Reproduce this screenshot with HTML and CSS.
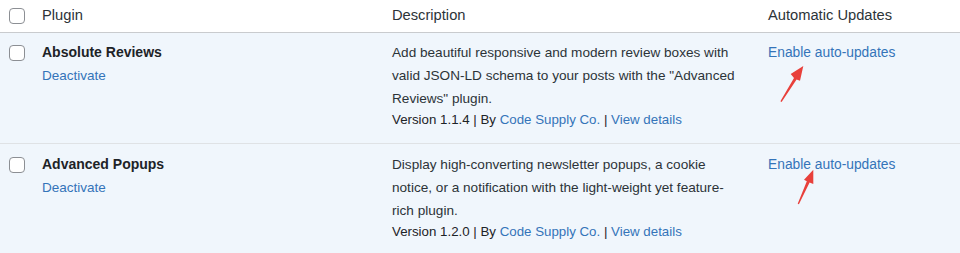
FILE: index.html
```html
<!DOCTYPE html>
<html lang="en">
<head>
<meta charset="utf-8">
<title>Plugins</title>
<link rel="stylesheet" href="styles.css">
</head>
<body>
<table class="plugins">
  <colgroup>
    <col class="c-cb"><col class="c-name"><col class="c-desc"><col class="c-auto">
  </colgroup>
  <thead>
    <tr>
      <th class="cb"><span class="box"></span></th>
      <th class="head">Plugin</th>
      <th class="head">Description</th>
      <th class="head">Automatic Updates</th>
    </tr>
  </thead>
  <tbody>
    <tr class="active first">
      <td class="cb"><span class="box"></span></td>
      <td class="name">
        <strong class="title">Absolute Reviews</strong>
        <a class="link act" href="#">Deactivate</a>
      </td>
      <td class="desc">
        <p class="text">Add beautiful responsive and modern review boxes with valid JSON-LD schema to your posts with the "Advanced Reviews" plugin.</p>
        <div class="meta">Version 1.1.4 | By <a class="link" href="#">Code Supply Co.</a> | <a class="link" href="#">View details</a></div>
      </td>
      <td class="auto">
        <a class="link" href="#">Enable auto-updates</a>
        <svg class="arrow arrow-1" width="26" height="40" viewBox="0 0 26 40"><path d="M0.4 36.3 L14 12.9 L10.7 9 L23.3 1 L20 15.7 L16.6 14.5 L1.6 37.1 Z" fill="#e8403b"/></svg>
      </td>
    </tr>
    <tr class="active">
      <td class="cb"><span class="box"></span></td>
      <td class="name">
        <strong class="title">Advanced Popups</strong>
        <a class="link act" href="#">Deactivate</a>
      </td>
      <td class="desc">
        <p class="text">Display high-converting newsletter popups, a cookie<br>notice, or a notification with the light-weight yet feature-<br>rich plugin.</p>
        <div class="meta">Version 1.2.0 | By <a class="link" href="#">Code Supply Co.</a> | <a class="link" href="#">View details</a></div>
      </td>
      <td class="auto">
        <a class="link" href="#">Enable auto-updates</a>
        <svg class="arrow arrow-2" width="20" height="40" viewBox="0 0 20 40"><path d="M0.7 35.7 L9.8 13.2 L7 11.7 L16.3 1.7 L16.3 16 L12.6 14.4 L1.9 36.3 Z" fill="#e8403b"/></svg>
      </td>
    </tr>
  </tbody>
</table>
</body>
</html>
```
FILE: styles.css
```css
html, body {
  margin: 0;
  padding: 0;
  background: #f0f6fc;
}
body {
  font-family: "Liberation Sans", Arial, sans-serif;
  color: #1d2327;
  width: 960px;
  height: 253px;
  overflow: hidden;
}
.plugins {
  border-collapse: collapse;
  table-layout: fixed;
  width: 960px;
}
.c-cb { width: 34px; }
.c-name { width: 350px; }
.c-desc { width: 376px; }
.c-auto { width: 200px; }

thead tr {
  background: #fff;
  border-bottom: 1px solid #c9cbce;
}
th {
  text-align: left;
  font-weight: 400;
  height: 29px;
  padding: 0 8px 3px;
  vertical-align: middle;
}
th.head {
  font-size: 14.7px;
  line-height: 20px;
  color: #2c3338;
}
th.cb, td.cb {
  padding-left: 9px;
  padding-right: 0;
}
th.cb { padding-bottom: 1px; padding-top: 0; }
.box {
  display: block;
  box-sizing: border-box;
  width: 16px;
  height: 16px;
  border: 1px solid #8c8f94;
  border-radius: 4px;
  background: #fff;
}
td.cb { vertical-align: top; padding-top: 12px; }

tbody tr {
  background: #f0f6fc;
  border-bottom: 1px solid #dfe2e5;
}
td {
  vertical-align: top;
  padding: 8px 8px 14px;
}
tbody tr:not(.first) td { padding-top: 9px; }
tbody tr:not(.first) td.cb { padding-top: 13px; }

.title {
  display: block;
  font-size: 14px;
  font-weight: 700;
  line-height: 23px;
  color: #1d2327;
}
.link {
  color: #3474b9;
  text-decoration: none;
}
.act {
  display: block;
  font-size: 13.5px;
  line-height: 23px;
}
.text {
  margin: 0;
  font-size: 13.6px;
  line-height: 23px;
  color: #2c3338;
}
.meta {
  font-size: 13.3px;
  line-height: 19px;
  color: #1d2327;
}
.auto {
  position: relative;
  font-size: 13.8px;
  line-height: 23px;
}
.auto .link { display: block; }
.arrow {
  position: absolute;
}
.arrow-1 { left: 20px; top: 32px; }
.arrow-2 { left: 37px; top: 24px; }
```
